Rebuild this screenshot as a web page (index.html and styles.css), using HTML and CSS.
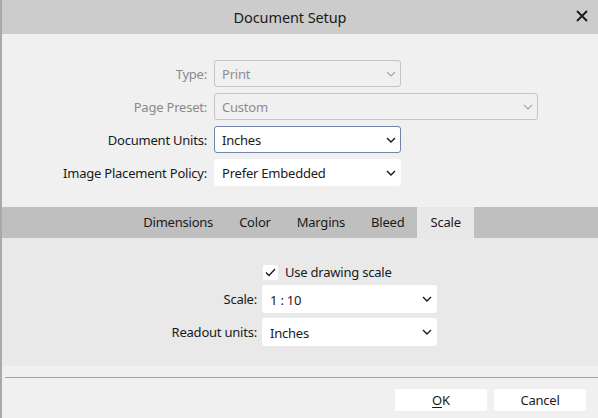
FILE: index.html
```html
<!DOCTYPE html>
<html>
<head>
<meta charset="utf-8">
<link rel="stylesheet" href="styles.css">
</head>
<body>
<div class="window">
  <div class="titlebar">
    <div class="title">Document Setup</div>
    <div class="close">
      <svg width="12" height="12" viewBox="0 0 12 12"><path d="M1 1 L11 11 M11 1 L1 11" stroke="#1a1a1a" stroke-width="1.8" fill="none"/></svg>
    </div>
  </div>
  <div class="settings">
    <div class="label disabled">Type:</div>
    <div class="select dis short"><span>Print</span><svg class="chev" width="10" height="6" viewBox="0 0 10 6"><path d="M1 1 L5 5 L9 1" stroke="#a8a8a8" stroke-width="1.2" fill="none"/></svg></div>
    <div class="label disabled">Page Preset:</div>
    <div class="select dis long"><span>Custom</span><svg class="chev" width="10" height="6" viewBox="0 0 10 6"><path d="M1 1 L5 5 L9 1" stroke="#a8a8a8" stroke-width="1.2" fill="none"/></svg></div>
    <div class="label">Document Units:</div>
    <div class="select focus short"><span>Inches</span><svg class="chev" width="10" height="6" viewBox="0 0 10 6"><path d="M1 1 L5 5 L9 1" stroke="#1a1a1a" stroke-width="1.4" fill="none"/></svg></div>
    <div class="label">Image Placement Policy:</div>
    <div class="select plain short"><span>Prefer Embedded</span><svg class="chev" width="10" height="6" viewBox="0 0 10 6"><path d="M1 1 L5 5 L9 1" stroke="#1a1a1a" stroke-width="1.4" fill="none"/></svg></div>
  </div>
  <div class="tabs">
    <div class="tab">Dimensions</div>
    <div class="tab">Color</div>
    <div class="tab">Margins</div>
    <div class="tab">Bleed</div>
    <div class="tab active">Scale</div>
  </div>
  <div class="panel">
    <div class="pgrid">
      <div></div>
      <div class="checkrow">
        <div class="checkbox"><svg width="11" height="9" viewBox="0 0 11 9"><path d="M1 4.5 L4 7.5 L10 1" stroke="#1a1a1a" stroke-width="1.3" fill="none"/></svg></div>
        <span>Use drawing scale</span>
      </div>
      <div class="label">Scale:</div>
      <div class="select plain scale"><span>1 : 10</span><svg class="chev" width="10" height="6" viewBox="0 0 10 6"><path d="M1 1 L5 5 L9 1" stroke="#1a1a1a" stroke-width="1.4" fill="none"/></svg></div>
      <div class="label">Readout units:</div>
      <div class="select plain scale"><span>Inches</span><svg class="chev" width="10" height="6" viewBox="0 0 10 6"><path d="M1 1 L5 5 L9 1" stroke="#1a1a1a" stroke-width="1.4" fill="none"/></svg></div>
    </div>
  </div>
  <div class="footer">
    <div class="sep"></div>
    <div class="buttons">
      <div class="btn"><u>O</u>K</div>
      <div class="btn">Cancel</div>
    </div>
  </div>
</div>
</body>
</html>
```
FILE: styles.css
```css
* { box-sizing: border-box; }
html, body { margin: 0; padding: 0; }
body {
  width: 598px;
  height: 418px;
  overflow: hidden;
  font-family: "Noto Sans", "Open Sans", sans-serif;
  font-size: 13px;
  letter-spacing: -0.22px;
  color: #1a1a1a;
  background: #f0f0f0;
}
.window {
  width: 598px;
  height: 418px;
  display: flex;
  flex-direction: column;
  border-left: 2px solid #a9a9a9;
  background: #f0f0f0;
}
.titlebar {
  height: 34px;
  background: #cccccc;
  display: flex;
  align-items: center;
  flex: none;
}
.title {
  flex: 1;
  text-align: center;
  padding-left: 10px;
  font-size: 14.5px;
  letter-spacing: -0.1px;
  color: #1a1a1a;
  padding-bottom: 1px;
}
.close {
  width: 30px;
  display: flex;
  align-items: center;
  justify-content: flex-start;
  padding-left: 8px;
  padding-bottom: 2px;
}
.settings {
  display: grid;
  grid-template-columns: 205px auto;
  column-gap: 7px;
  row-gap: 6px;
  padding-top: 26px;
  align-items: center;
  justify-items: start;
  flex: none;
}
.label {
  justify-self: end;
  white-space: nowrap;
  color: #1a1a1a;
}
.label.disabled { color: #8a8a8a; }
.select {
  height: 27px;
  display: flex;
  align-items: center;
  justify-content: space-between;
  padding: 0 4px 0 7px;
  border-radius: 3px;
  background: #ffffff;
  border: 1px solid transparent;
}
.select span { padding-top: 1px; }
.select.short { width: 187px; }
.select.long { width: 324px; }
.select.dis {
  background: #f0f0f0;
  border-color: #c4c4c4;
  color: #8d8d8d;
}
.select.focus {
  border-color: #6f84a6;
}
.chev { flex: none; }
.tabs {
  margin-top: 21px;
  height: 31px;
  background: #bfbfbf;
  display: flex;
  justify-content: center;
  align-items: stretch;
  padding-left: 4px;
  flex: none;
}
.tab {
  padding: 0 13px;
  display: flex;
  align-items: center;
  color: #1a1a1a;
  padding-bottom: 1px;
}
.tab.active { background: #e8e8e8; }
.panel {
  height: 128px;
  background: #e9e9e9;
  padding-top: 26px;
  flex: none;
}
.pgrid {
  display: grid;
  grid-template-columns: 255px auto;
  column-gap: 5px;
  row-gap: 5px;
  align-items: center;
  justify-items: start;
}
.checkrow {
  height: 16px;
  display: flex;
  align-items: center;
  gap: 7px;
  padding-left: 1px;
}
.checkbox {
  width: 15px;
  height: 15px;
  background: #ffffff;
  border-radius: 2px;
  display: flex;
  align-items: center;
  justify-content: center;
}
.select.scale {
  width: 175px;
  height: 28px;
}
.footer {
  flex: 1;
  background: #f0f0f0;
  padding-top: 11px;
}
.sep {
  margin-left: 3px;
  height: 1px;
  background: #a3a3a3;
}
.buttons {
  display: flex;
  justify-content: flex-end;
  gap: 7px;
  padding-top: 11px;
  padding-right: 12px;
}
.btn {
  width: 92px;
  height: 22px;
  background: #ffffff;
  border-radius: 2px;
  display: flex;
  align-items: center;
  justify-content: center;
  padding-bottom: 1px;
}
.btn u { text-underline-offset: 2px; }
```
